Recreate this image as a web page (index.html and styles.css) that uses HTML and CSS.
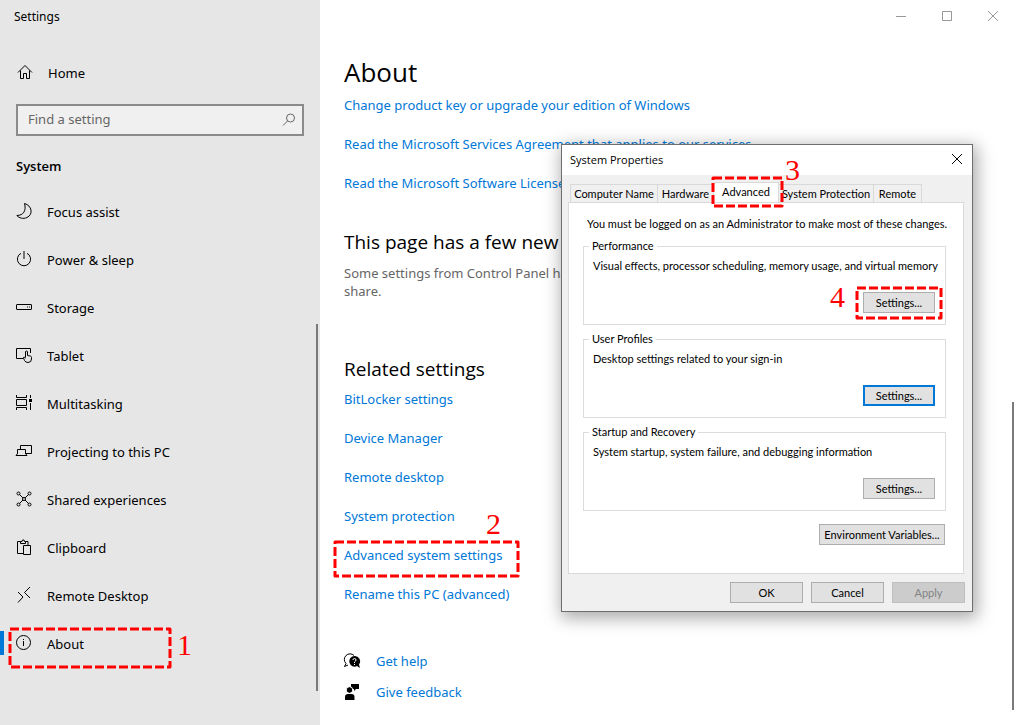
FILE: index.html
```html
<!DOCTYPE html>
<html lang="en">
<head>
<meta charset="utf-8">
<meta name="viewport" content="width=device-width, initial-scale=1">
<title>Settings</title>
<link rel="stylesheet" href="styles.css">
</head>
<body>
<div class="window">
  <aside class="sidebar">
    <div class="app-title">Settings</div>
    <a class="nav-link home" href="#">
      <svg class="icon" viewBox="0 0 16 16"><path d="M1 8.500 8 1.500l7 7M3.500 6.500v8h3v-5h3v5h3v-8"/></svg>
      <span>Home</span>
    </a>
    <label class="search">
      <input type="text" placeholder="Find a setting" aria-label="Find a setting">
      <svg class="icon search-icon" viewBox="0 0 16 16"><circle cx="10.500" cy="6" r="4"/><path d="M7.500 9 3 13.500"/></svg>
    </label>
    <h2 class="section-title">System</h2>
    <nav class="nav">
      <a class="nav-link" href="#"><svg class="icon" viewBox="0 0 16 16"><path d="M8.500.5c7.500 2 9 11 2.500 14C7 16.300 3 15 .8 12.500 7.500 12.500 10.500 7.500 8.500.5z"/></svg><span>Focus assist</span></a>
      <a class="nav-link" href="#"><svg class="icon" viewBox="0 0 16 16"><path d="M5 2.300a6.600 6.600 0 1 0 6 0M8 0v8"/></svg><span>Power &amp; sleep</span></a>
      <a class="nav-link" href="#"><svg class="icon" viewBox="0 0 16 16"><rect x=".5" y="5.500" width="15" height="5" rx=".5"/><path d="M11 8h1M13 8h1"/></svg><span>Storage</span></a>
      <a class="nav-link" href="#"><svg class="icon" viewBox="0 0 16 16"><path d="M7 11.500H.5v-10h14V6M9.500 10.500V5q0-1 1-1t1 1v3.500l3 .6q1 .3 1 1.400v1.500q0 3.500-3.500 3.500-2.500 0-3.500-2l-1-2.500q-.2-1 .8-1l1.200 1.300"/></svg><span>Tablet</span></a>
      <a class="nav-link" href="#"><svg class="icon" viewBox="0 0 16 16"><path d="M.5 0v2.500h10V0M.5 4.500h10v6H.5zM.5 15v-2.500h10V15M14.500 0v3M14.500 8v7"/><path class="solid" d="M13 4h3v3h-3z"/></svg><span>Multitasking</span></a>
      <a class="nav-link" href="#"><svg class="icon" viewBox="0 0 16 16"><path d="M4.500 6V2.500h11v8H10M1.500 11V6.500h8V11M0 12.500h11M1.500 10.500 0 12.500M9.500 10.500l1.500 2"/></svg><span>Projecting to this PC</span></a>
      <a class="nav-link" href="#"><svg class="icon" viewBox="0 0 16 16"><circle cx="2.500" cy="2.500" r="1.500"/><circle cx="13.500" cy="2.500" r="1.500"/><circle cx="2.500" cy="13.500" r="1.500"/><circle cx="13.500" cy="13.500" r="1.500"/><circle cx="8" cy="8" r="1.500"/><path d="m3.500 3.500 3.500 3.500M12.500 3.500 9 7M3.500 12.500 7 9M12.500 12.500 9 9"/></svg><span>Shared experiences</span></a>
      <a class="nav-link" href="#"><svg class="icon" viewBox="0 0 16 16"><path d="M7 14.500H1.500v-12h3M9.500 2.500h2.500V6M4.500 4.500V2.500h1.500L6.500 1h1.500l.5 1.500h1v2zM7.500 6.500h7v9h-7z"/></svg><span>Clipboard</span></a>
      <a class="nav-link" href="#"><svg class="icon" viewBox="0 0 16 16"><path d="m2 5 5 5-5 5.500M14 0 8.500 5.500l5.500 5.500"/></svg><span>Remote Desktop</span></a>
      <a class="nav-link current" href="#" aria-current="page"><svg class="icon" viewBox="0 0 16 16"><circle cx="7.500" cy="7.500" r="7"/><path d="M7.500 6v5M7.500 4v1"/></svg><span>About</span>
        <svg class="mark mark-about"><rect width="100%" height="100%"/></svg>
        <span class="step step-1">1</span>
      </a>
    </nav>
    <div class="scroll-thumb sidebar-thumb"></div>
  </aside>

  <main class="main">
    <div class="caption">
      <button aria-label="Minimize"><svg viewBox="0 0 10 10"><path d="M0 5.500h10"/></svg></button>
      <button aria-label="Maximize"><svg viewBox="0 0 10 10"><path d="M.5.5h9v9h-9z"/></svg></button>
      <button aria-label="Close"><svg viewBox="0 0 10 10"><path d="m0 0 10 10M10 0 0 10"/></svg></button>
    </div>
    <div class="content">
      <h1>About</h1>
      <ul class="links">
        <li><a href="#">Change product key or upgrade your edition of Windows</a></li>
        <li><a href="#">Read the Microsoft Services Agreement that applies to our services</a></li>
        <li><a href="#">Read the Microsoft Software License</a></li>
      </ul>
      <h2 class="notice-title">This page has a few new</h2>
      <p>Some settings from Control Panel have<br>share.</p>
      <h2 class="related-title">Related settings</h2>
      <ul class="links">
        <li><a href="#">BitLocker settings</a></li>
        <li><a href="#">Device Manager</a></li>
        <li><a href="#">Remote desktop</a></li>
        <li><a href="#">System protection</a></li>
        <li><a class="marked" href="#">Advanced system settings
          <svg class="mark mark-link"><rect width="100%" height="100%"/></svg>
          <span class="step step-2">2</span></a></li>
        <li><a href="#">Rename this PC (advanced)</a></li>
      </ul>
      <div class="support">
        <a href="#"><svg class="icon" viewBox="0 0 16 16"><path d="M2 10.500A5 5 0 1 1 10 2.500M2 10.500.5 13.500l3.500-1.500"/><path class="solid" d="M10.500 3a5.300 5.300 0 1 0 2.500 10l3 2-1-3.500A5.300 5.300 0 0 0 10.500 3z"/><path class="knockout" d="M9 7q0-1.500 1.500-1.500T12 7q0 1-1.500 2v1M10.500 11v1"/></svg>Get help</a>
        <a href="#"><svg class="icon" viewBox="0 0 16 16"><path class="solid" d="M7 0h8v5h-3l-2 2V5H7zM1 16v-3q0-3 3-3h3.500q3 0 3 3v3z"/><circle class="halo" cx="5.500" cy="6" r="3.300"/></svg>Give feedback</a>
      </div>
    </div>
    <div class="scroll-thumb main-thumb"></div>
  </main>

  <section class="dialog" role="dialog" aria-label="System Properties">
    <header class="dialog-title">
      <span>System Properties</span>
      <button aria-label="Close dialog"><svg viewBox="0 0 10 10"><path d="m0 0 10 10M10 0 0 10"/></svg></button>
    </header>
    <div class="dialog-body">
      <div class="tabs" role="tablist">
        <button role="tab">Computer Name</button>
        <button role="tab">Hardware</button>
        <button role="tab" class="selected" aria-selected="true">Advanced
          <svg class="mark mark-tab"><rect width="100%" height="100%"/></svg>
          <span class="step step-3">3</span></button>
        <button role="tab">System Protection</button>
        <button role="tab">Remote</button>
      </div>
      <div class="panel">
        <div class="intro">You must be logged on as an Administrator to make most of these changes.</div>
        <fieldset>
          <legend>Performance</legend>
          <div>Visual effects, processor scheduling, memory usage, and virtual memory</div>
          <div class="action">
            <button class="push">Settings...</button>
            <svg class="mark mark-button"><rect width="100%" height="100%"/></svg>
            <span class="step step-4">4</span>
          </div>
        </fieldset>
        <fieldset>
          <legend>User Profiles</legend>
          <div>Desktop settings related to your sign-in</div>
          <div class="action"><button class="push focused">Settings...</button></div>
        </fieldset>
        <fieldset>
          <legend>Startup and Recovery</legend>
          <div>System startup, system failure, and debugging information</div>
          <div class="action"><button class="push">Settings...</button></div>
        </fieldset>
        <button class="push environment">Environment Variables...</button>
      </div>
      <footer class="dialog-footer">
        <button class="push">OK</button>
        <button class="push">Cancel</button>
        <button class="push" disabled>Apply</button>
      </footer>
    </div>
  </section>
</div>
</body>
</html>
```

FILE: styles.css
```css
* { box-sizing: border-box; }

body {
  margin: 0;
  font: 13px/20px "Noto Sans", "Open Sans", sans-serif;
  color: #000;
  background: #fff;
}

h1, h2, p, ul { margin: 0; padding: 0; font-weight: 400; }
ul { list-style: none; }
a { color: #0078d7; text-decoration: none; }
button { font: inherit; color: inherit; padding: 0; border: 0; background: none; }
svg { fill: none; stroke: currentColor; }

.window { position: relative; display: flex; min-height: 100vh; overflow: hidden; }

/* Sidebar */
.sidebar { position: relative; flex: 0 0 320px; background: #e6e6e6; }
.app-title { padding: 9px 14px 0; font-size: 12px; line-height: 16px; }
.nav-link { position: relative; display: flex; align-items: center; gap: 15px; height: 48px; padding-left: 16px; color: #000; }
.home { margin-top: 24px; padding-left: 17px; }
.icon { flex: none; width: 16px; height: 16px; overflow: visible; }
.nav-link .icon { margin-bottom: 2px; }
.solid { fill: #000; stroke: none; }
.knockout { stroke: #fff; }
.halo { fill: #000; stroke: #fff; }

.search {
  display: flex;
  align-items: center;
  height: 32px;
  margin: 7px 16px 0;
  padding: 0 6px 0 10px;
  border: 2px solid #8a8a8a;
  background: #f0f0f0;
}
.search input { flex: 1; min-width: 0; padding: 0 0 2px; border: 0; outline: 0; background: none; font: inherit; }
.search input::placeholder { color: #666; opacity: 1; }
.search-icon { color: #666; }
.section-title { margin: 20px 16px 12px; font: 600 13px/20px "Open Sans", sans-serif; }
.current::before { content: ""; position: absolute; left: 0; top: 11px; width: 4px; height: 24px; background: #0078d7; }

.scroll-thumb { position: absolute; width: 2px; background: #7a7a7a; }
.sidebar-thumb { right: 2px; top: 324px; bottom: 34px; }
.main-thumb { right: 2px; top: 402px; bottom: 15px; }

/* Main pane */
.main { position: relative; flex: 1; min-width: 0; }
.caption { display: flex; justify-content: flex-end; color: #999; }
.caption button { display: grid; place-items: center; width: 46px; height: 32px; }
.caption svg { width: 10px; height: 10px; }
.content { padding: 22px 24px 23px; white-space: nowrap; }
h1 { margin-bottom: 5px; font: 26px/36px "Open Sans", sans-serif; }
.links { display: grid; gap: 19px; justify-items: start; }
.content h2 { font: 19px/28px "Open Sans", sans-serif; }
.content .notice-title { margin-top: 35px; }
.content .related-title { margin: 55px 0 6px; }
p { margin-top: 8px; line-height: 18px; color: #666; }
.marked { position: relative; display: block; }
.support { display: grid; gap: 11px; margin-top: 47px; }
.support a { display: flex; align-items: center; gap: 16px; }
.support .icon { color: #000; }

/* Dialog */
.dialog {
  position: absolute;
  left: 561px;
  top: 144px;
  width: 412px;
  border: 1px solid #6e6e6e;
  background: #f0f0f0;
  box-shadow: 2px 4px 16px 2px rgba(0, 0, 0, .34);
  font: 11px/14px Lato, "Liberation Sans", sans-serif;
}
.dialog-title { display: flex; justify-content: space-between; height: 30px; padding-left: 8px; background: #fff; font: 11px/30px "Open Sans", sans-serif; }
.dialog-title button { display: grid; place-items: center; width: 30px; height: 28px; }
.dialog-title svg { width: 10px; height: 10px; overflow: visible; }
.dialog-body { padding: 7px 7px 8px 6px; }
.tabs { display: grid; grid-template-columns: 88px 56px 65px 95px 48px; align-items: end; height: 20px; padding-left: 2px; }
.tabs button { height: 18px; border: 1px solid #d9d9d9; border-bottom: 0; white-space: nowrap; }
.tabs button + button { border-left: 0; }
.tabs .selected { position: relative; height: 20px; padding-bottom: 2px; background: #fff; }
.panel { height: 372px; margin-right: 1px; padding: 14px 18px 0 14px; border: 1px solid #d9d9d9; background: #fff; }
.intro { margin: 0 0 8px 4px; white-space: nowrap; }
fieldset { height: 86px; min-width: 0; margin: 0 -1px 7px 0; padding: 6px 10px 0 9px; border: 1px solid #dcdcdc; white-space: nowrap; }
legend { margin-left: -4px; padding: 0 3px; }
.action { position: relative; width: 72px; margin: 19px 0 0 auto; }
.push { display: block; width: 73px; height: 21px; border: 1px solid #adadad; background: #e1e1e1; white-space: nowrap; }
.action .push { width: 100%; }
.push.focused { border: 2px solid #0078d7; }
.push:disabled { border-color: #bfbfbf; background: #ccc; color: #838383; }
.environment { width: 126px; margin: 13px 0 0 auto; }
.dialog-footer { display: flex; justify-content: flex-end; gap: 8px; margin-top: 8px; }

/* Walkthrough annotations */
.mark { position: absolute; overflow: visible; color: #f00; stroke-width: 3; stroke-dasharray: 9 3; stroke-linejoin: round; pointer-events: none; }
.mark-about { left: 10px; top: 9px; width: 160px; height: 38px; }
.mark-link { left: -9px; top: -3px; width: 183px; height: 34px; }
.mark-tab { left: -1px; top: -5px; width: 69px; height: 28px; }
.mark-button { left: -6px; top: -4px; width: 84px; height: 30px; }
.step { position: absolute; z-index: 1; font: 30px/30px "Liberation Serif", serif; color: #f00; }
.step-1 { left: 177px; top: 10px; }
.step-2 { left: 142px; top: -36px; }
.step-3 { left: 71px; top: -28px; }
.step-4 { left: -33px; top: -10px; }
```
